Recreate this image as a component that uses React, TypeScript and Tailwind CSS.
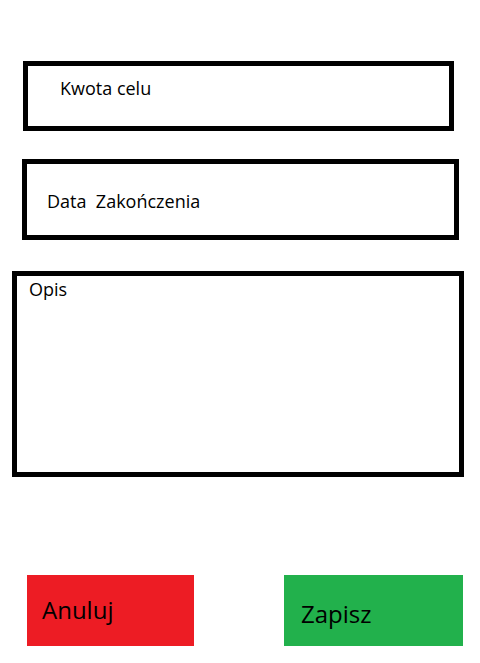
export default function App() {
  return (
    <div
      className="w-[480px] h-[663px] bg-white overflow-hidden text-black"
      style={{ fontFamily: '"Open Sans", "Noto Sans", sans-serif' }}
    >
      <div className="pt-[61px]">
        <div className="ml-[23px] w-[431px] h-[70px] border-[5px] border-black pl-[32px] pt-[10px] text-[18px] leading-[24px]">
          Kwota celu
        </div>
        <div className="mt-[28px] ml-[22px] w-[437px] h-[81px] border-[5px] border-black pl-[20px] pt-[25px] text-[18px] leading-[24px] whitespace-pre">
          {"Data  Zakończenia"}
        </div>
        <div className="mt-[31px] ml-[12px] w-[452px] h-[206px] border-[5px] border-black pl-[12px] pt-[1px] text-[18px] leading-[24px]">
          Opis
        </div>
        <div className="mt-[98px] flex">
          <button className="ml-[27px] w-[167px] h-[71px] bg-[#ed1c24] text-left pl-[15px] pt-[19px] flex items-start text-[24px] leading-[32px]">
            Anuluj
          </button>
          <button className="ml-[90px] w-[179px] h-[71px] bg-[#22b14c] text-left pl-[17px] pt-[23px] flex items-start text-[24px] leading-[32px]">
            Zapisz
          </button>
        </div>
      </div>
    </div>
  );
}
